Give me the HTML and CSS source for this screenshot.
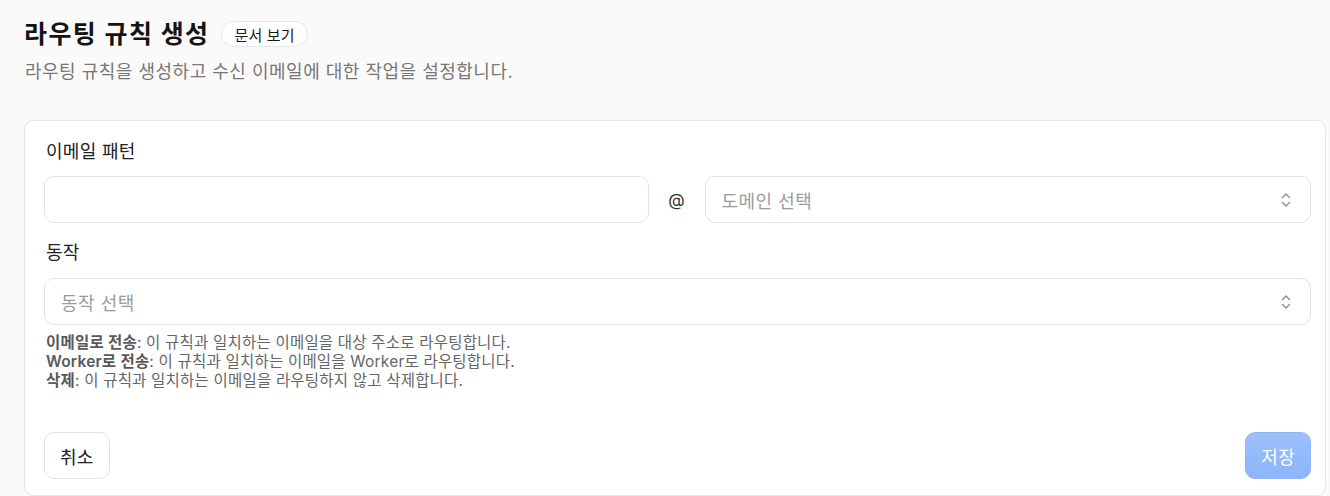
FILE: index.html
```html
<html>
	<head>
		<title>라우팅 규칙 생성</title>
		<link rel="stylesheet" href="styles.css">
	</head>
	<body>
		<div class="page">
			<div class="title-row">
				<h1 class="title">라우팅 규칙 생성</h1>
				<a class="doc-badge">문서 보기</a>
			</div>
			<p class="subtitle">라우팅 규칙을 생성하고 수신 이메일에 대한 작업을 설정합니다.</p>

			<div class="card">
				<div class="field-label">이메일 패턴</div>
				<div class="pattern-row">
					<input class="text-input" type="text">
					<span class="at-sign">@</span>
					<div class="select-box">
						<span class="placeholder">도메인 선택</span>
						<svg class="chevrons" width="12" height="18" viewBox="0 0 12 18" fill="none" stroke="#8a8a8a" stroke-width="1.3" stroke-linecap="round" stroke-linejoin="round">
							<path d="M2.5 6.5 L6 3 L9.5 6.5"/>
							<path d="M2.5 11.5 L6 15 L9.5 11.5"/>
						</svg>
					</div>
				</div>

				<div class="field-label second">동작</div>
				<div class="select-box">
					<span class="placeholder">동작 선택</span>
					<svg class="chevrons" width="12" height="18" viewBox="0 0 12 18" fill="none" stroke="#8a8a8a" stroke-width="1.3" stroke-linecap="round" stroke-linejoin="round">
						<path d="M2.5 6.5 L6 3 L9.5 6.5"/>
						<path d="M2.5 11.5 L6 15 L9.5 11.5"/>
					</svg>
				</div>

				<div class="help">
					<div><b>이메일로 전송</b>: 이 규칙과 일치하는 이메일을 대상 주소로 라우팅합니다.</div>
					<div><b>Worker로 전송</b>: 이 규칙과 일치하는 이메일을 Worker로 라우팅합니다.</div>
					<div><b>삭제</b>: 이 규칙과 일치하는 이메일을 라우팅하지 않고 삭제합니다.</div>
				</div>

				<div class="actions">
					<button class="btn btn-cancel">취소</button>
					<button class="btn btn-save" disabled>저장</button>
				</div>
			</div>
		</div>
	</body>
</html>
```

FILE: styles.css
```css
* {
	box-sizing: border-box;
	font-family: Inter, "Noto Sans CJK KR", sans-serif;
}

body {
	margin: 0;
	background: #fafafa;
	color: #1a1a1a;
}

.page {
	padding: 18px 4px 0 24px;
}

.title-row {
	display: flex;
	align-items: center;
	gap: 12px;
}

.title {
	margin: 0;
	font-size: 25px;
	line-height: 32px;
	font-weight: 700;
	letter-spacing: 1.4px;
	color: #141414;
}

.doc-badge {
	display: inline-flex;
	align-items: center;
	height: 26px;
	padding: 0 12px;
	border: 1px solid #e6e6e6;
	border-radius: 13px;
	background: #fff;
	font-size: 15px;
	letter-spacing: 0.2px;
	color: #1a1a1a;
}

.subtitle {
	margin: 10px 0 0 1px;
	font-size: 18px;
	line-height: 24px;
	letter-spacing: 0.5px;
	color: #777;
}

.card {
	margin-top: 36px;
	background: #fff;
	border: 1px solid #e6e6e6;
	border-radius: 9px;
	padding: 19px 14px 16px 19px;
}

.field-label {
	font-size: 18px;
	line-height: 24px;
	letter-spacing: 0.3px;
	color: #222;
	margin-left: 2px;
}

.field-label.second {
	margin-top: 18px;
}

.pattern-row {
	display: flex;
	align-items: center;
	margin-top: 12px;
}

.pattern-row .text-input,
.pattern-row .select-box {
	flex: 1;
	margin-top: 0;
}

.text-input {
	height: 47px;
	border: 1px solid #e3e3e3;
	border-radius: 10px;
	background: #fff;
	padding: 0 16px;
	font-size: 18px;
	outline: none;
}

.at-sign {
	width: 56px;
	text-align: center;
	font-size: 17px;
	color: #333;
}

.select-box {
	display: flex;
	align-items: center;
	justify-content: space-between;
	height: 47px;
	margin-top: 13px;
	border: 1px solid #e3e3e3;
	border-radius: 10px;
	background: #fff;
	padding: 0 18px 0 16px;
}

.placeholder {
	font-size: 18px;
	letter-spacing: 0.5px;
	color: #9b9b9b;
}

.help {
	margin-top: 8px;
	margin-left: 2px;
	font-size: 15.5px;
	line-height: 19px;
	letter-spacing: 0.2px;
	color: #666;
}

.help b {
	font-weight: 600;
	color: #595959;
}

.actions {
	display: flex;
	justify-content: space-between;
	margin-top: 42px;
}

.btn {
	height: 47px;
	padding: 0 15px;
	border-radius: 10px;
	font-size: 18px;
	letter-spacing: 0.3px;
}

.btn-cancel {
	background: #fff;
	border: 1px solid #e0e0e0;
	color: #222;
}

.btn-save {
	background: linear-gradient(#9dbffc, #8cb5fa);
	border: 1px solid #8fb6fa;
	color: #fff;
}
```
